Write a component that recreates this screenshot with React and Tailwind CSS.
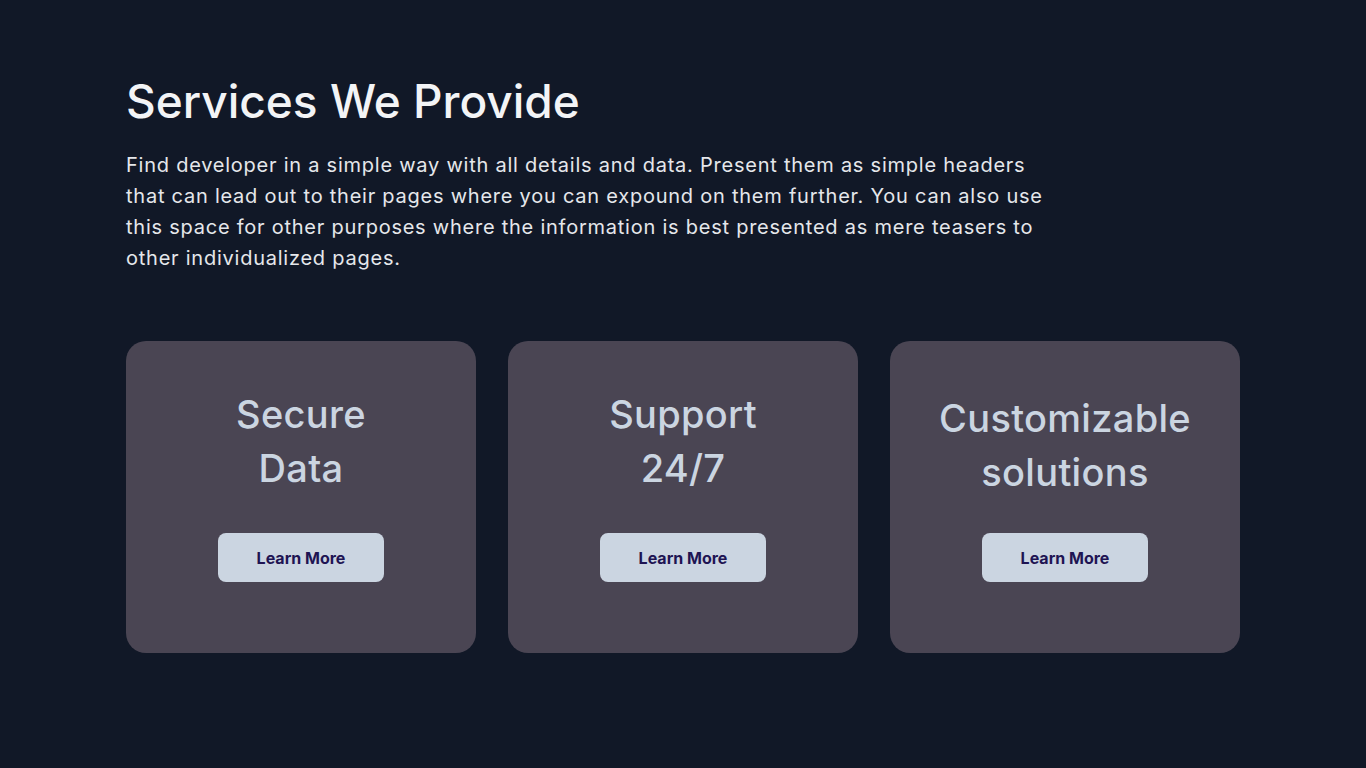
import React from 'react';

const services = [
  { title: ["Secure", "Data"], shift: false },
  { title: ["Support", "24/7"], shift: false },
  { title: ["Customizable", "solutions"], shift: true },
];

export default function App() {
  return (
    <div className="min-h-screen w-full bg-[#111827] px-[126px] pt-[72px] font-['Inter',sans-serif]">
      <h1 className="text-[46px] font-medium leading-[58px] text-[#f3f4f6]">Services We Provide</h1>
      <p className="mt-[20px] whitespace-nowrap text-[20px] leading-[31px] tracking-[0.76px] text-[#e5e7eb]">
        Find developer in a simple way with all details and data. Present them as simple headers
        <br />
        that can lead out to their pages where you can expound on them further. You can also use
        <br />
        this space for other purposes where the information is best presented as mere teasers to
        <br />
        other individualized pages.
      </p>
      <div className="mt-[67px] grid grid-cols-3 gap-[32px]">
        {services.map((s, i) => (
          <div key={i} className="flex h-[312px] flex-col items-center rounded-[20px] bg-[#4a4553] pt-[46px]">
            <h3
              className={`text-center text-[38px] font-medium leading-[54px] tracking-[0.3px] text-[#cbd5e1] ${
                s.shift ? "mt-[4px]" : "mt-0"
              }`}
            >
              {s.title[0]}
              <br />
              {s.title[1]}
            </h3>
            <button
              className={`h-[49px] w-[166px] rounded-[8px] bg-[#cbd5e1] text-[16px] font-bold text-[#1e1453] ${
                s.shift ? "mt-[34px]" : "mt-[38px]"
              }`}
            >
              Learn More
            </button>
          </div>
        ))}
      </div>
    </div>
  );
}
